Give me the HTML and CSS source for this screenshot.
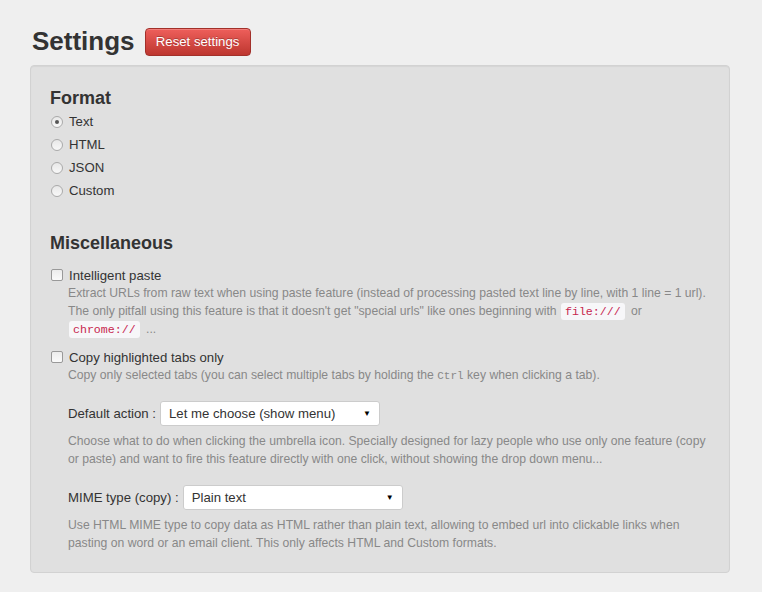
FILE: index.html
```html
<!DOCTYPE html>
<html lang="en">
<head>
    <meta charset="UTF-8">
    <title>Settings</title>
    <link rel="stylesheet" href="styles.css">
</head>
<body>
    <div class="page">
        <div class="page-header">
            <h1>Settings</h1>
            <button class="btn-danger">Reset settings</button>
        </div>

        <div class="well">
            <h3>Format</h3>
            <div class="radios">
                <label class="radio"><span class="radio-dot checked"></span>Text</label>
                <label class="radio"><span class="radio-dot"></span>HTML</label>
                <label class="radio"><span class="radio-dot"></span>JSON</label>
                <label class="radio"><span class="radio-dot"></span>Custom</label>
            </div>

            <h3 class="section">Miscellaneous</h3>
            <div class="option">
                <label class="checkbox"><span class="box"></span>Intelligent paste</label>
                <p class="help">Extract URLs from raw text when using paste feature (instead of processing pasted text line by line, with 1 line = 1 url).<br>
                The only pitfall using this feature is that it doesn't get "special urls" like ones beginning with <code>file:///</code> or <code>chrome://</code> ...</p>
            </div>
            <div class="option">
                <label class="checkbox"><span class="box"></span>Copy highlighted tabs only</label>
                <p class="help">Copy only selected tabs (you can select multiple tabs by holding the <kbd>Ctrl</kbd> key when clicking a tab).</p>
            </div>

            <div class="field">
                <div class="field-row">
                    <span class="field-label">Default action :</span>
                    <div class="select">Let me choose (show menu)<span class="caret">&#9660;</span></div>
                </div>
                <p class="help">Choose what to do when clicking the umbrella icon. Specially designed for lazy people who use only one feature (copy or paste) and want to fire this feature directly with one click, without showing the drop down menu...</p>
            </div>

            <div class="field">
                <div class="field-row">
                    <span class="field-label">MIME type (copy) :</span>
                    <div class="select">Plain text<span class="caret">&#9660;</span></div>
                </div>
                <p class="help">Use HTML MIME type to copy data as HTML rather than plain text, allowing to embed url into clickable links when pasting on word or an email client. This only affects HTML and Custom formats.</p>
            </div>
        </div>
    </div>
</body>
</html>
```

FILE: styles.css
```css
body {
    margin: 0;
    background-color: #efefef;
    font-family: "Liberation Sans", Arial, sans-serif;
    font-size: 13.2px;
    color: #333;
}

.page {
    padding: 26px 32px 20px 30px;
}

.page-header {
    display: flex;
    align-items: center;
    gap: 10px;
    padding-left: 2px;
    margin-bottom: 8px;
}

h1 {
    margin: 0;
    font-size: 26px;
    font-weight: bold;
    color: #333;
}

.btn-danger {
    background: linear-gradient(#ee5f5b, #bd362f);
    color: #fff;
    border: 1px solid #a2302a;
    border-radius: 4px;
    font-family: inherit;
    font-size: 13.2px;
    padding: 0 10px;
    width: 106px;
    height: 28px;
    text-shadow: 0 -1px 0 rgba(0, 0, 0, 0.25);
    box-shadow: inset 0 1px 0 rgba(255, 255, 255, 0.2);
}

.well {
    background-color: #e0e0e0;
    border: 1px solid #d2d2d2;
    border-radius: 4px;
    padding: 21px 19px 20px 19px;
    box-shadow: inset 0 1px 1px rgba(0, 0, 0, 0.05);
}

h3 {
    margin: 0;
    font-size: 18px;
    font-weight: bold;
    color: #333;
    line-height: 22px;
}

h3.section {
    margin-top: 30px;
    margin-bottom: 12px;
}

.radios {
    margin-top: 1px;
}

.radio {
    display: flex;
    align-items: center;
    height: 23px;
}

.radio-dot {
    width: 10px;
    height: 10px;
    border: 1px solid #aaa;
    border-radius: 50%;
    background: linear-gradient(#e8e8e8, #f8f8f8);
    margin: 0 6px 0 1px;
    position: relative;
}

.radio-dot.checked::after {
    content: "";
    position: absolute;
    left: 3px;
    top: 3px;
    width: 4px;
    height: 4px;
    border-radius: 50%;
    background: #555;
}

.option {
    margin-bottom: 10px;
}

.checkbox {
    display: flex;
    align-items: center;
    height: 18px;
}

.box {
    width: 10px;
    height: 10px;
    border: 1px solid #999;
    border-radius: 2px;
    background: linear-gradient(#ececec, #fafafa);
    margin: 0 6px 0 1px;
}

.help {
    margin: 0;
    padding-left: 18px;
    color: #888;
    font-size: 12.2px;
    line-height: 18px;
}

code {
    font-family: "Liberation Mono", "Courier New", monospace;
    font-size: 11.6px;
    line-height: 14px;
    color: #c7254e;
    background-color: #f7f7f9;
    border-radius: 3px;
    padding: 2px 4px;
    margin: 0 3px 0 1px;
}

kbd {
    font-family: "Liberation Mono", "Courier New", monospace;
    font-size: 11px;
    color: #888;
}

.field {
    padding-left: 18px;
    margin-top: 16px;
}

.field + .field {
    margin-top: 17px;
}

.field .help {
    padding-left: 0;
}

.field-row {
    display: flex;
    align-items: center;
    gap: 4px;
    margin-bottom: 6px;
}

.field-label {
    color: #333;
}

.select {
    display: flex;
    align-items: center;
    justify-content: space-between;
    background-color: #fff;
    border: 1px solid #ccc;
    border-radius: 3px;
    width: 220px;
    height: 25px;
    padding: 0 8px;
    color: #333;
    font-size: 13.2px;
    box-sizing: border-box;
}

.caret {
    font-size: 8px;
    color: #000;
}
```
